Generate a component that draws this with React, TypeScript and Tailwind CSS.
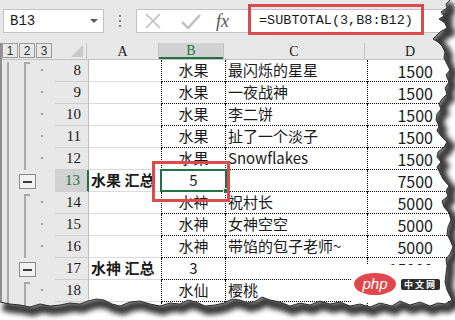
import React from 'react';

type Row = {
  n: number;
  a?: string;
  b: string;
  c: string;
  d: string;
  total?: boolean;
  first?: boolean;
};

const rows: Row[] = [
  { n: 8, b: '水果', c: '最闪烁的星星', d: '1500', first: true },
  { n: 9, b: '水果', c: '一夜战神', d: '1500' },
  { n: 10, b: '水果', c: '李二饼', d: '1500' },
  { n: 11, b: '水果', c: '扯了一个淡子', d: '1500' },
  { n: 12, b: '水果', c: 'Snowflakes', d: '1500' },
  { n: 13, a: '水果 汇总', b: '5', c: '', d: '7500', total: true },
  { n: 14, b: '水神', c: '祝村长', d: '5000', first: true },
  { n: 15, b: '水神', c: '女神空空', d: '5000' },
  { n: 16, b: '水神', c: '带馅的包子老师~', d: '5000' },
  { n: 17, a: '水神 汇总', b: '3', c: '', d: '15000', total: true },
  { n: 18, b: '水仙', c: '樱桃', d: '', first: true },
  { n: 19, b: '', c: '', d: '' },
];

const SELECTED = 13;

// outline gutter for one row: level lines, dots and collapse buttons
const Gutter = ({ row }: { row: Row }) => (
  <svg width="53" height="22" className="shrink-0 block">
    <rect x="5" y={row.n === 8 ? 2 : 0} width="2" height="22" fill="#a9a9a9" />
    {row.total ? (
      <>
        <rect x="17.5" y="4.5" width="16" height="14" fill="#f2f2f2" stroke="#8c8c8c" />
        <rect x="21" y="11" width="9" height="2" fill="#3a3a3a" />
      </>
    ) : (
      <>
        <rect x="22" y={row.first ? 2 : 0} width="2" height={row.first ? 20 : 22} fill="#a9a9a9" />
        {row.first && <rect x="22" y="2" width="6" height="2" fill="#a9a9a9" />}
        <rect x="39" y="9" width="2" height="2" fill="#a0a0a0" />
      </>
    )}
  </svg>
);

const edgeRight: [number, number][] = [
  [450, 0], [446, 4], [447, 8], [441, 12], [444, 16], [439, 19], [445, 23], [447, 28], [440, 32],
  [436, 36], [433, 39], [438, 42], [442, 46], [445, 52], [444, 58], [447, 64], [450, 70], [446, 75],
  [449, 82], [445, 88], [447, 94], [442, 99], [439, 104], [441, 109], [437, 114], [436, 120],
  [439, 126], [437, 131], [442, 137], [447, 142], [444, 147], [438, 152], [437, 157], [441, 162],
  [437, 167], [440, 173], [443, 179], [449, 186], [446, 191], [448, 196], [442, 201], [444, 207],
  [449, 213], [451, 220], [448, 227], [447, 234], [450, 240], [453, 247], [450, 254], [446, 259],
  [447, 266], [446, 274], [445, 282], [447, 290], [450, 296], [452, 300],
];
const edgeBottom: [number, number][] = [
  [445, 304], [438, 303], [430, 306], [420, 302], [410, 305], [400, 301], [392, 306], [380, 303],
  [370, 307], [360, 304], [350, 306], [340, 302], [330, 304], [320, 301], [310, 305], [300, 303],
  [290, 306], [280, 302], [270, 300], [262, 297], [256, 301], [248, 303], [240, 300], [232, 299],
  [224, 303], [215, 305], [205, 306], [196, 302], [188, 300], [180, 304], [170, 303], [160, 306],
  [150, 304], [140, 301], [130, 302], [120, 306], [112, 304], [104, 300], [96, 299], [88, 301],
  [80, 304], [70, 303], [60, 305], [50, 306], [40, 304], [30, 307], [20, 305], [10, 304], [0, 302],
];

const TornEdge = () => {
  const pts = [...edgeRight, ...edgeBottom];
  const line = 'M' + pts.map(([x, y]) => `${x} ${y}`).join(' L');
  const outside = line + ' L0 320 L455 320 L455 0 Z';
  return (
    <svg width="455" height="320" className="absolute inset-0 pointer-events-none">
      <defs>
        <filter id="blur" x="-10%" y="-10%" width="120%" height="120%">
          <feGaussianBlur stdDeviation="2.5" />
        </filter>
        <clipPath id="out">
          <path d={outside} />
        </clipPath>
      </defs>
      <path d={outside} fill="#ffffff" />
      <g clipPath="url(#out)">
        <path d={line} transform="translate(3 4)" fill="none" stroke="#3a3a3a" strokeWidth="10" filter="url(#blur)" />
      </g>
      <path d={line} fill="none" stroke="#2e2e2e" strokeWidth="1" />
    </svg>
  );
};

export default function App() {
  return (
    <div className="relative w-[455px] h-[320px] overflow-hidden bg-white font-['Noto_Sans_CJK_SC',sans-serif] text-[#1a1a1a]">
      {/* formula bar */}
      <div className="flex h-[43px] bg-[#e8e8e8] pt-[9px] pl-[3px]">
        <div className="w-[101px] h-[24px] bg-white border border-[#c3c3c3] flex items-center pl-[6px] pr-[5px] font-['Liberation_Mono',monospace] text-[14px]">
          <span className="flex-1">B13</span>
          <svg width="8" height="5"><path d="M0 0 L8 0 L4 4 Z" fill="#5a5a5a" /></svg>
        </div>
        <div className="w-[32px] h-[24px] flex flex-col items-center justify-center gap-[3px]">
          <div className="w-[2px] h-[2px] bg-[#7a7a7a]" />
          <div className="w-[2px] h-[2px] bg-[#7a7a7a]" />
          <div className="w-[2px] h-[2px] bg-[#7a7a7a]" />
        </div>
        <div className="flex-1 h-[24px] bg-white border border-[#c3c3c3] border-r-0 flex items-center">
          <svg width="16" height="16" className="ml-[8px]">
            <path d="M1 1 L15 15 M15 1 L1 15" stroke="#bdbdbd" strokeWidth="1.6" />
          </svg>
          <svg width="20" height="16" className="ml-[20px]">
            <path d="M1 9 L7 15 L19 2" stroke="#bdbdbd" strokeWidth="2.4" fill="none" />
          </svg>
          <span className="ml-[15px] font-['Liberation_Serif',serif] italic text-[18px] text-[#555] leading-none">fx</span>
          <span className="ml-[30px] font-['Liberation_Mono',monospace] text-[13.5px] whitespace-nowrap">=SUBTOTAL(3,B8:B12)</span>
        </div>
      </div>

      {/* sheet */}
      <div className="border-l-2 border-[#8f8f8f]">
        {/* header row */}
        <div className="flex h-[17px] bg-[#e8e8e8] border-b border-[#c2c2c2]">
          <div className="w-[51px] shrink-0 flex">
            {['1', '2', '3'].map((l) => (
              <div key={l} className="w-[16px] h-[15px] mr-[1px] border border-[#9c9c9c] flex items-center justify-center font-['Liberation_Sans',sans-serif] text-[12px] text-[#333] leading-none">
                {l}
              </div>
            ))}
          </div>
          <div className="w-[34px] shrink-0 relative border-r border-[#c2c2c2]">
            <svg width="12" height="12" className="absolute right-[3px] bottom-[2px]">
              <path d="M12 0 L12 12 L0 12 Z" fill="#c9c9c9" />
            </svg>
          </div>
          <div className="w-[72px] shrink-0 flex items-center justify-center border-r border-[#c2c2c2] font-['Liberation_Serif',serif] text-[14px]">A</div>
          <div className="w-[64px] shrink-0 flex items-center justify-center bg-[#d2d2d2] border-b-2 border-[#217346] text-[#217346] font-['Liberation_Serif',serif] text-[14px]">B</div>
          <div className="w-[142px] shrink-0 flex items-center justify-center border-x border-[#c2c2c2] font-['Liberation_Serif',serif] text-[14px]">C</div>
          <div className="w-[90px] shrink-0 flex items-center pl-[40px] font-['Liberation_Serif',serif] text-[14px]">D</div>
        </div>

        {rows.map((r) => {
          const sel = r.n === SELECTED;
          return (
            <div key={r.n} className="flex h-[22px]">
              <div className="bg-[#e8e8e8] shrink-0">
                <Gutter row={r} />
              </div>
              <div
                className={`w-[34px] shrink-0 flex items-center justify-end pr-[7px] border-b border-[#cfcfcf] font-['Liberation_Serif',serif] text-[15px] ${
                  sel
                    ? 'bg-[#d2d2d2] text-[#217346] border-r-2 border-r-[#217346]'
                    : 'bg-[#e8e8e8] border-r border-r-[#bdbdbd]'
                }`}
              >
                {r.n}
              </div>
              <div className="w-[72px] shrink-0 flex items-center pl-[2px] border-b border-[#dadada] font-bold text-[15px] whitespace-nowrap overflow-hidden">
                {r.a}
              </div>
              <div className="w-[64px] shrink-0 relative flex items-center justify-center border-l border-b border-dotted border-black text-[15px]">
                {r.b}
                {sel && (
                  <div className="absolute -left-[2px] -top-[1px] -right-[2px] -bottom-[1px] border-2 border-[#217346]">
                    <div className="absolute -right-[4px] -bottom-[4px] w-[6px] h-[6px] bg-[#217346] border border-white" />
                  </div>
                )}
              </div>
              <div className="w-[142px] shrink-0 flex items-center pl-[2px] border-l border-b border-dotted border-black text-[15px] whitespace-nowrap">
                {r.c}
              </div>
              <div className="w-[90px] shrink-0 flex items-center justify-end pr-[24px] border-l border-b border-dotted border-black text-[16px]">
                {r.d}
              </div>
            </div>
          );
        })}
      </div>

      {/* annotation boxes */}
      <div className="absolute left-[248px] top-[4px] w-[176px] h-[31px] border-[3px] border-[#dc4b4b]" />
      <div className="absolute left-[152px] top-[161px] w-[78px] h-[41px] border-[3px] border-[#dc4b4b]" />

      {/* watermark */}
      <div className="absolute left-[352px] top-[265px] w-[95px] h-[38px] bg-white flex items-center pl-[2px] gap-[5px]">
        <div className="w-[42px] h-[22px] rounded-[50%] bg-[#e0484d] flex items-center justify-center">
          <span className="font-['Liberation_Sans',sans-serif] italic text-white text-[15px] leading-none -mt-[2px]">php</span>
        </div>
        <span className="bg-[#2e2e2e] text-white text-[9px] leading-[11px] px-[3px] rounded-[2px] font-bold tracking-[2px]">中文网</span>
      </div>

      <TornEdge />
    </div>
  );
}
